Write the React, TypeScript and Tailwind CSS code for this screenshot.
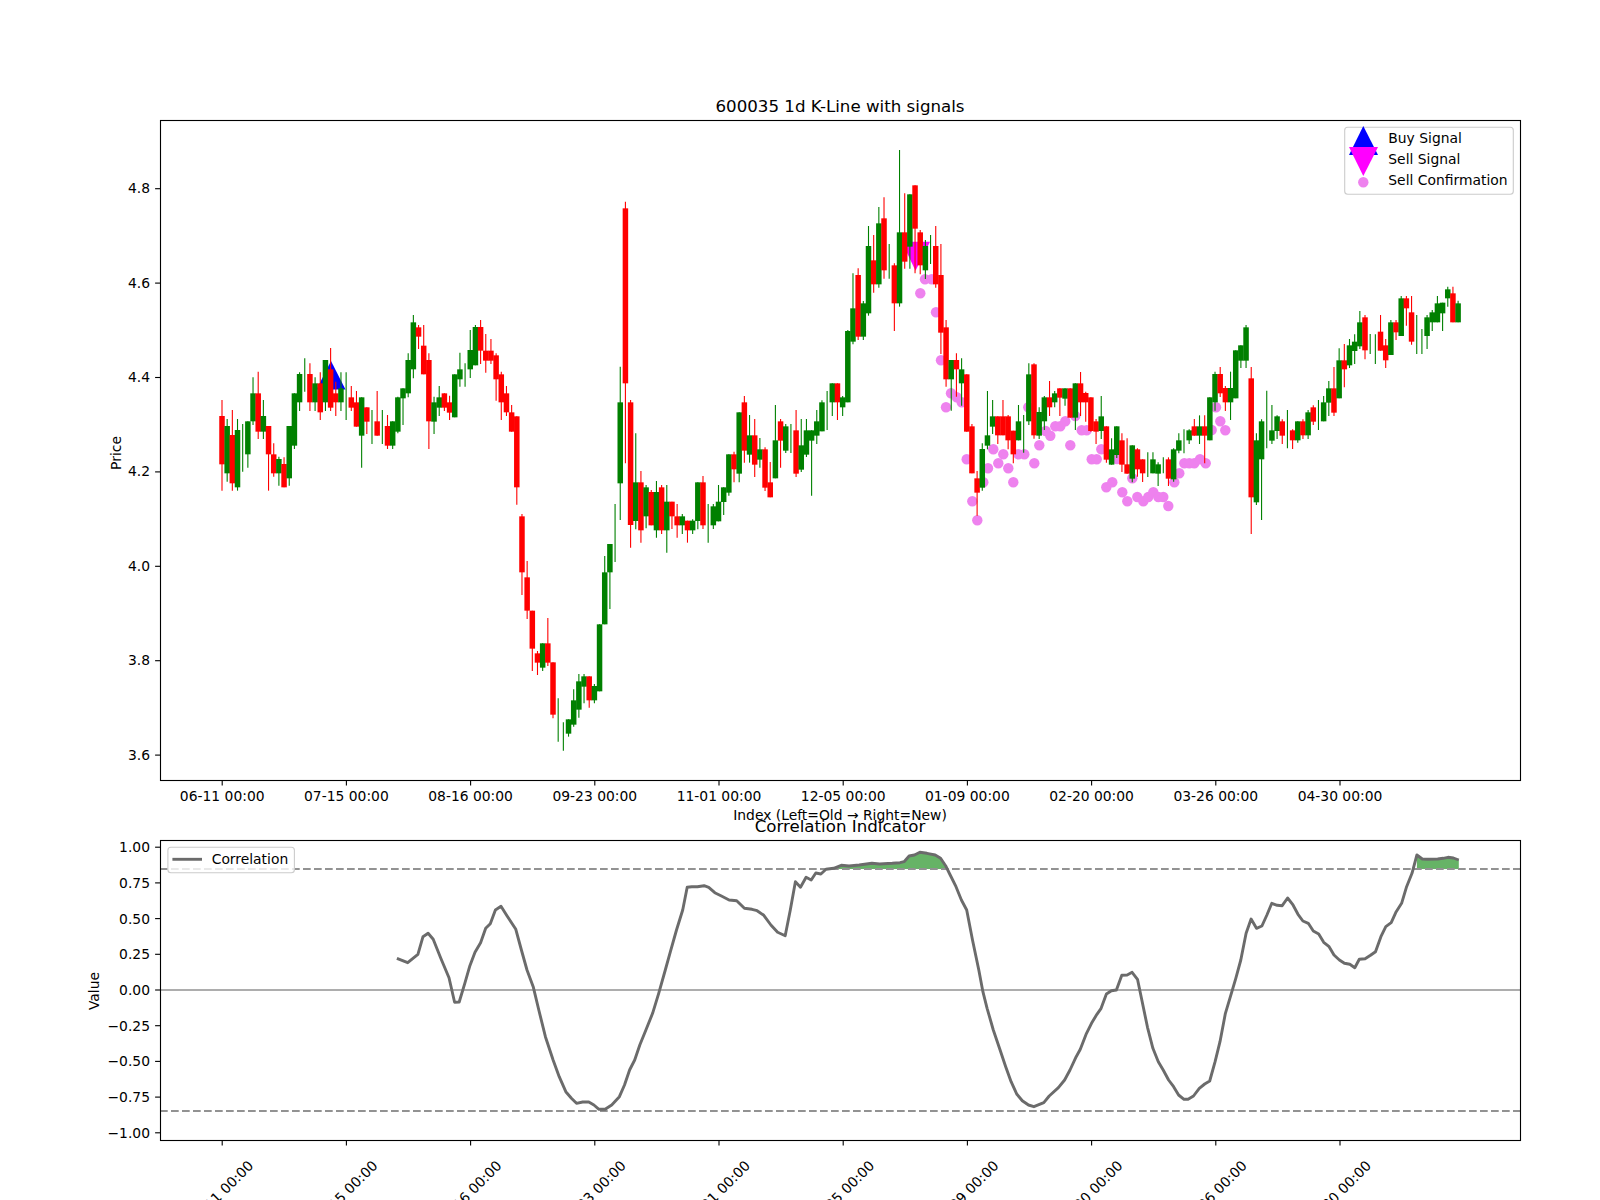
const groups: [number, string][] = [
  [280, `r 408 553 360 632|g 438 580 417 605|r 465 610 390 632|g 450 622 417 632|g 0 0 432 575|g 424 523 424 563|g 340 424 292 435|r 340 455 275 477|g 408 455 360 477|r 438 523 438 632|r 523 580 490 590|g 537 580 530 617|r 552 622 532 622|g 438 595 438 617|g 340 497 340 507|g 282 367 277 393|g 0 0 235 335|r 282 367 250 393|g 310 367 292 393|r 310 397 277 420|g 240 367 240 393|r 268 383 204 393|r 340 367 305 408|g 325 367 277 393|g 0 0 277 420|r 352 383 318 393|r 367 440 333 440|g 352 467 352 563|r 382 425 382 462|g 0 0 390 492|r 424 467 333 467|g 0 0 390 492|r 438 497 405 507|g 424 497 424 507|g 352 455 350 460|g 325 355 325 435|g 240 340 220 352|g 127 268 105 295|r 142 170 135 207|r 197 283 135 283|r 240 424 220 507|g 367 425 350 462|g 352 383 318 408|r 340 383 340 393|r 367 398 347 420`],
  [180, `g 583 712 583 712|g 568 598 518 620|g 0 0 550 620|g 510 568 450 594|g 441 556 435 556|r 441 512 420 552|r 512 542 462 578|r 512 542 477 552|r 526 598 520 662|r 583 667 575 720|r 640 697 618 708|r 697 755 675 755`],
  [470, `r -161 52 -161 104|r 139 307 132 375|r 322 422 273 447|r 422 536 422 603|r 550 578 543 615|g 520 593 520 603|r 520 578 444 588|r 577 734 577 745|g 0 0 685 815|g 0 0 757 842|g 748 791 748 800|g 691 764 658 770|g 634 719 612 743|g 619 650 612 700|r 619 691 619 713|g 648 691 642 700|g 463 664 463 664|g 307 463 258 463|g 222 307 222 417|g 0 0 102 276|g -203 40 -310 150|r -785 -260 -805 -20|r -203 165 -210 233|g 37 153 -110 178|r 37 181 3 218|g 52 139 45 175|r 66 166 60 166|g 66 181 33 203|r 52 181 45 192|g 95 181 45 248|r 95 139 95 177|r 139 166 102 203|g 139 166 132 192|r 152 181 152 218|g 152 181 148 192|g 37 153 37 178`],
  [330, `r 457 586 438 597|g 0 0 522 638|g 529 586 522 597|g 515 574 465 574|g 472 516 472 555|g 373 488 373 497|r 373 418 365 457|g 247 431 247 457|r 217 362 198 398|g 316 374 255 398|r 316 404 267 441|g 358 389 324 413|r 358 473 352 483|r 457 502 396 502|g 331 445 225 445|r 274 332 267 413|g 289 362 282 369|g 0 0 282 369|r 301 431 240 441|g 346 419 267 426|g 301 374 267 381|g 301 332 301 497|g 274 317 240 342|g 217 304 211 304|g 0 0 183 300|g 160 217 160 258|r 160 217 160 270`],
  [140, `g 772 802 768 828|g 573 787 570 787|g 505 605 400 613|r 405 590 385 600|g 490 590 483 600|g 318 520 258 527|r 361 433 285 458|g 250 433 201 443|r 235 391 172 416|g 0 0 312 416|r 376 490 370 573|g 277 490 30 500|r 277 365 160 386|g 163 320 163 386|r 136 266 136 400|r 277 376 270 403|g 318 391 300 417|g 0 0 285 372|r 318 433 258 443|r 405 578 312 642|r 562 718 540 740|g 660 718 660 812|r 660 688 640 770|g 688 730 655 797|r 703 875 703 875`],
  [350, `r 229 370 222 370|r 385 428 363 497|g 297 413 280 422|g 256 287 123 298|g 199 230 150 252|r 199 256 199 282|r 199 256 150 256|r 199 271 195 298|r 242 313 242 340|g 214 271 165 271|g 0 0 195 308|g 73 214 40 225|r 43 256 40 266|g 186 257 172 267|g 142 214 138 240|r 142 172 93 198|g 130 157 123 172|r 115 143 115 198|g 115 146 115 167|r 115 203 115 203|g 100 203 100 240|r 100 157 66 198|r 129 157 125 215|r 142 243 142 245|r 214 245 207 282|g 199 243 138 267|r 229 329 229 338|g 298 344 265 344|g 229 315 229 324|r 271 344 250 366|r 343 371 265 371|g 286 386 286 397|r 298 358 295 380|r 328 370 328 396|g 0 0 307 381|g 328 370 307 370|g 343 371 337 408|g 0 0 322 370|r 328 386 322 408`],
  [300, `g 448 538 445 545|g 421 452 400 460|g 0 0 388 460|g 391 421 388 432|r 379 407 357 407|g 379 407 346 432|r 379 407 346 490|g 292 421 292 421|g 222 307 215 332|r 222 280 201 291|r 264 307 258 333|g 264 307 215 360|g 151 295 151 295|g 136 182 136 204|g 82 182 75 204|r 235 592 201 702|g 421 607 400 615|g 364 478 358 660|g 0 0 272 445|g 391 422 315 432|g 349 393 346 417|r 364 407 358 432|g 0 0 330 445|r 391 421 388 447|g 364 421 364 428|r 364 406 358 417|g 337 406 330 417|r 322 365 316 375|g 0 0 300 390|g 307 364 288 364|g 265 308 243 348|r 265 338 201 348|g 181 295 145 295|r 181 208 132 262|g 136 196 117 204|g 125 153 103 192|g 67 139 33 147|r 52 151 45 178|g 0 0 102 162|g 0 0 103 192|r 95 152 45 152|r 136 181 117 204`],
  [270, `g 157 255 150 255|r 157 187 150 210|g 85 198 78 198|r 85 115 78 167|r 127 215 78 224|g 0 0 135 252|g 0 0 177 252|g 142 198 135 237|g 127 157 120 183|g 100 157 78 157|g 98 130 98 183|g 58 85 50 110|r 70 157 50 157|g 100 157 92 157`],
];

type Candle = { x: number; c: string; top: number; bot: number; wt: number; wb: number };
const candles: Candle[] = [];
groups.forEach(([y0, s]) => {
  s.split("|").forEach((row) => {
    const p = row.split(" ");
    const i = candles.length;
    candles.push({
      x: 222 + 5.172 * i,
      c: p[0] === "r" ? "#ff0000" : "#008000",
      top: y0 + Number(p[1]) / 3,
      bot: y0 + Number(p[2]) / 3,
      wt: y0 + Number(p[3]) / 3,
      wb: y0 + Number(p[4]) / 3,
    });
  });
});
const hasBody = (s: Candle) => s.bot > s.top;

const dots: [number, number][] = [
  [925, 279.3],[931.7, 279.3],[920.3, 293.3],[936, 312.3],[941, 360.3],[951, 393.3],[956.7, 397.3],[961.7, 402.3],[946, 407.3],
  [993.3, 449.3],[966.7, 459.3],[988, 468.3],[1003.3, 454.3],[998.3, 463.3],[1008.3, 468.3],[983.3, 482.3],[972.3, 501.3],[977.3, 520.3],
  [1013.3, 482.3],[1018.3, 454.3],[1024.3, 454.3],[1034.3, 463.3],[1039.3, 445.3],[1028.3, 407.3],[1045.7, 431],[1050.3, 435.7],[1055.3, 426.3],
  [1060.3, 426.3],[1065.3, 421.3],[1070.3, 445.3],[1075.3, 416],[1081.7, 430.3],[1086.7, 430.3],[1091.7, 459.3],[1096.7, 459.3],[1101.3, 449.3],
  [1106.3, 487.3],[1112.3, 482.3],[1117, 459],[1122.3, 492.3],[1127.3, 501.3],[1132.3, 478.3],[1137.3, 497],[1143.3, 501.3],[1148.3, 497],
  [1153.3, 492.3],[1158.3, 497],[1163.3, 497],[1168.3, 506],[1174.3, 482.3],[1179.3, 473.3],[1184.3, 463.3],[1189.3, 463.3],[1194.3, 463.3],
  [1200, 459.3],[1205.7, 463.3],[1211.7, 430],[1216, 407.3],[1220.3, 421.3],[1225.3, 430.3],
];

const z9 = [484,565,505,578,525,553,535,500,545,490,555,508,570,565,586,623,597,697,606,696,617,640,627,587,637,547,648,518,658,475,667,461,677,420,688,409,700,438,717,478,728,540,739,600,751,650,762,720,775,800,790,870,802,920,815,965,826,985,836,1000,848,996,860,996,870,1005,880,1018,892,1018,905,1005,920,980,930,945,940,900,950,870,960,825,972,780,985,730,997,670,1010,600,1020,545,1032,480,1044,420,1053,352,1062,350,1073,350,1086,347,1095,352,1107,368,1120,378,1135,390,1150,392,1165,415,1180,418,1190,422,1203,436,1217,465,1230,487,1245,497,1255,420,1265,335,1275,352,1286,322,1296,330,1305,309,1315,312,1325,298,1340,295,1355,286,1370,288,1390,285,1415,280,1430,282,1455,280];
const z10 = [0,278,10,275,22,258,35,255,48,247,65,250,85,255,98,265,110,287,120,312,135,350,148,390,161,420,175,510,190,600,200,665,210,715,225,780,240,835,255,890,268,935,282,973,295,992,310,1005,323,1010,347,998,360,978,382,953,397,930,410,900,425,860,435,838,450,790,462,760,475,733,485,715,498,672,510,662,522,660,535,616,548,615,560,607,573,628,585,700,597,772,610,835,623,875,635,900,648,930,660,950,672,975,685,988,695,988,708,978,722,955,735,942,747,933,760,875,772,815,785,730,797,680,810,625,822,570,835,490,847,447,860,475,873,468,885,435,897,400,910,406,922,407,935,384,947,403,960,433,972,453,985,460,997,483,1010,492,1022,517,1035,530,1047,555,1060,570,1072,580,1085,583,1097,593,1108,568,1122,566,1135,556,1147,545,1160,500,1172,470,1185,458,1197,425,1210,400,1222,350,1235,310,1247,255,1260,267,1272,268,1297,267,1310,265,1322,262,1335,264,1348,270];
const corr: [number, number][] = [];
for (let i = 0; i < z9.length; i += 2) corr.push([150 + z9[i] / 1.96, 770 + z9[i + 1] / 3]);
for (let i = 0; i < z10.length; i += 2) corr.push([900 + z10[i] / 2.4123, 770 + z10[i + 1] / 3]);
const toPts = (a: [number, number][]) => a.map((p) => p[0].toFixed(1) + "," + p[1].toFixed(1)).join(" ");
const fill1 = corr.filter((p) => p[0] >= 826 && p[0] <= 946 && p[1] <= 869);
const fill2 = corr.filter((p) => p[0] >= 1416);

const tickX = [0, 1, 2, 3, 4, 5, 6, 7, 8, 9].map((i) => 222.2 + 124.2 * i);
const dateLabels = ["06-11 00:00","07-15 00:00","08-16 00:00","09-23 00:00","11-01 00:00","12-05 00:00","01-09 00:00","02-20 00:00","03-26 00:00","04-30 00:00"];
const priceTicks = [["4.8", 188.7],["4.6", 283.1],["4.4", 377.5],["4.2", 471.9],["4.0", 566.3],["3.8", 660.7],["3.6", 755.1]] as [string, number][];
const valueTicks = ["1.00","0.75","0.50","0.25","0.00","−0.25","−0.50","−0.75","−1.00"].map((t, i) => [t, 847.2 + 35.7 * i]) as [string, number][];

export default function App() {
  return (
    <div className="w-[1600px] h-[1200px] bg-white overflow-hidden flex flex-col font-['DejaVu_Sans',sans-serif] text-black">
      <svg className="block shrink-0" width={1600} height={836} viewBox="0 0 1600 836" fontSize={13.89} fill="#000">
        <text x={840} y={111.7} fontSize={16.67} textAnchor="middle">600035 1d K-Line with signals</text>

        {dots.map(([x, y], i) => (
          <circle key={i} cx={x} cy={y} r={5.2} fill="#ee82ee" />
        ))}
        <polygon points="331,361 316.5,389.5 345.5,389.5" fill="#0000ff" />
        <polygon points="901.7,241.7 930,241.7 915.5,270.7" fill="#ff00ff" />

        {candles.map((s, i) => (
          <g key={i}>
            <line x1={s.x} x2={s.x} y1={s.wt} y2={s.wb} stroke={s.c} strokeWidth={1.1} />
            {hasBody(s) && <rect x={s.x - 2.75} y={s.top} width={5.5} height={s.bot - s.top} fill={s.c} />}
          </g>
        ))}

        <rect x={160.5} y={120.5} width={1360} height={660} fill="none" stroke="#000" strokeWidth={1.11} />
        {priceTicks.map(([t, y]) => (
          <g key={t}>
            <line x1={155.1} x2={160} y1={y} y2={y} stroke="#000" strokeWidth={1.11} />
            <text x={150} y={y + 4.5} textAnchor="end">{t}</text>
          </g>
        ))}
        {tickX.map((x, i) => (
          <g key={i}>
            <line x1={x} x2={x} y1={781} y2={785.4} stroke="#000" strokeWidth={1.11} />
            <text x={x} y={801.3} textAnchor="middle">{dateLabels[i]}</text>
          </g>
        ))}
        <text transform="translate(120.5,453) rotate(-90)" textAnchor="middle">Price</text>

        <rect x={1344.7} y={127.3} width={168.6} height={67} rx={3} fill="#fff" fillOpacity={0.8} stroke="#cccccc" strokeWidth={1.11} />
        <polygon points="1363.3,126 1349,155 1378,155" fill="#0000ff" />
        <polygon points="1349,147 1378,147 1363.3,176" fill="#ff00ff" />
        <circle cx={1363.3} cy={182.3} r={5.2} fill="#ee82ee" />
        <text x={1388.3} y={143}>Buy Signal</text>
        <text x={1388.3} y={164.2}>Sell Signal</text>
        <text x={1388.3} y={185.2}>Sell Confirmation</text>

        <text x={840} y={820} textAnchor="middle">Index (Left=Old → Right=New)</text>
        <text x={840} y={831.7} fontSize={16.67} textAnchor="middle">Correlation Indicator</text>
      </svg>

      <svg className="block shrink-0" width={1600} height={364} viewBox="0 836 1600 364" fontSize={13.89} fill="#000">
        <polygon points={toPts([[fill1[0][0], 869], ...fill1, [fill1[fill1.length - 1][0], 869]])} fill="#008000" fillOpacity={0.6} />
        <polygon points={toPts([[fill2[0][0], 869], ...fill2, [fill2[fill2.length - 1][0], 869]])} fill="#008000" fillOpacity={0.6} />
        <line x1={160} x2={1520} y1={990} y2={990} stroke="#adadad" strokeWidth={2.1} />
        <line x1={160} x2={1520} y1={869} y2={869} stroke="#929292" strokeWidth={2.2} strokeDasharray="7.7 3.3" />
        <line x1={160} x2={1520} y1={1111} y2={1111} stroke="#929292" strokeWidth={2.2} strokeDasharray="7.7 3.3" />
        <polyline points={toPts(corr)} fill="none" stroke="#6b6b6b" strokeWidth={2.9} strokeLinejoin="round" />

        <rect x={160.5} y={840.5} width={1360} height={300} fill="none" stroke="#000" strokeWidth={1.11} />
        {valueTicks.map(([t, y]) => (
          <g key={t}>
            <line x1={155.1} x2={160} y1={y} y2={y} stroke="#000" strokeWidth={1.11} />
            <text x={150} y={y + 5} textAnchor="end">{t}</text>
          </g>
        ))}
        {tickX.map((x, i) => (
          <g key={i}>
            <line x1={x} x2={x} y1={1141} y2={1145.4} stroke="#000" strokeWidth={1.11} />
            <text transform={`translate(${x - 1.5},1193) rotate(-45)`} textAnchor="middle" dominantBaseline="central">{dateLabels[i]}</text>
          </g>
        ))}
        <text transform="translate(99,991) rotate(-90)" textAnchor="middle">Value</text>

        <rect x={167.9} y={847.3} width={126.5} height={25.4} rx={3} fill="#fff" fillOpacity={0.8} stroke="#cccccc" strokeWidth={1.11} />
        <line x1={172.4} x2={202} y1={859.3} y2={859.3} stroke="#6b6b6b" strokeWidth={2.9} />
        <text x={211.7} y={864.2}>Correlation</text>
      </svg>
    </div>
  );
}
